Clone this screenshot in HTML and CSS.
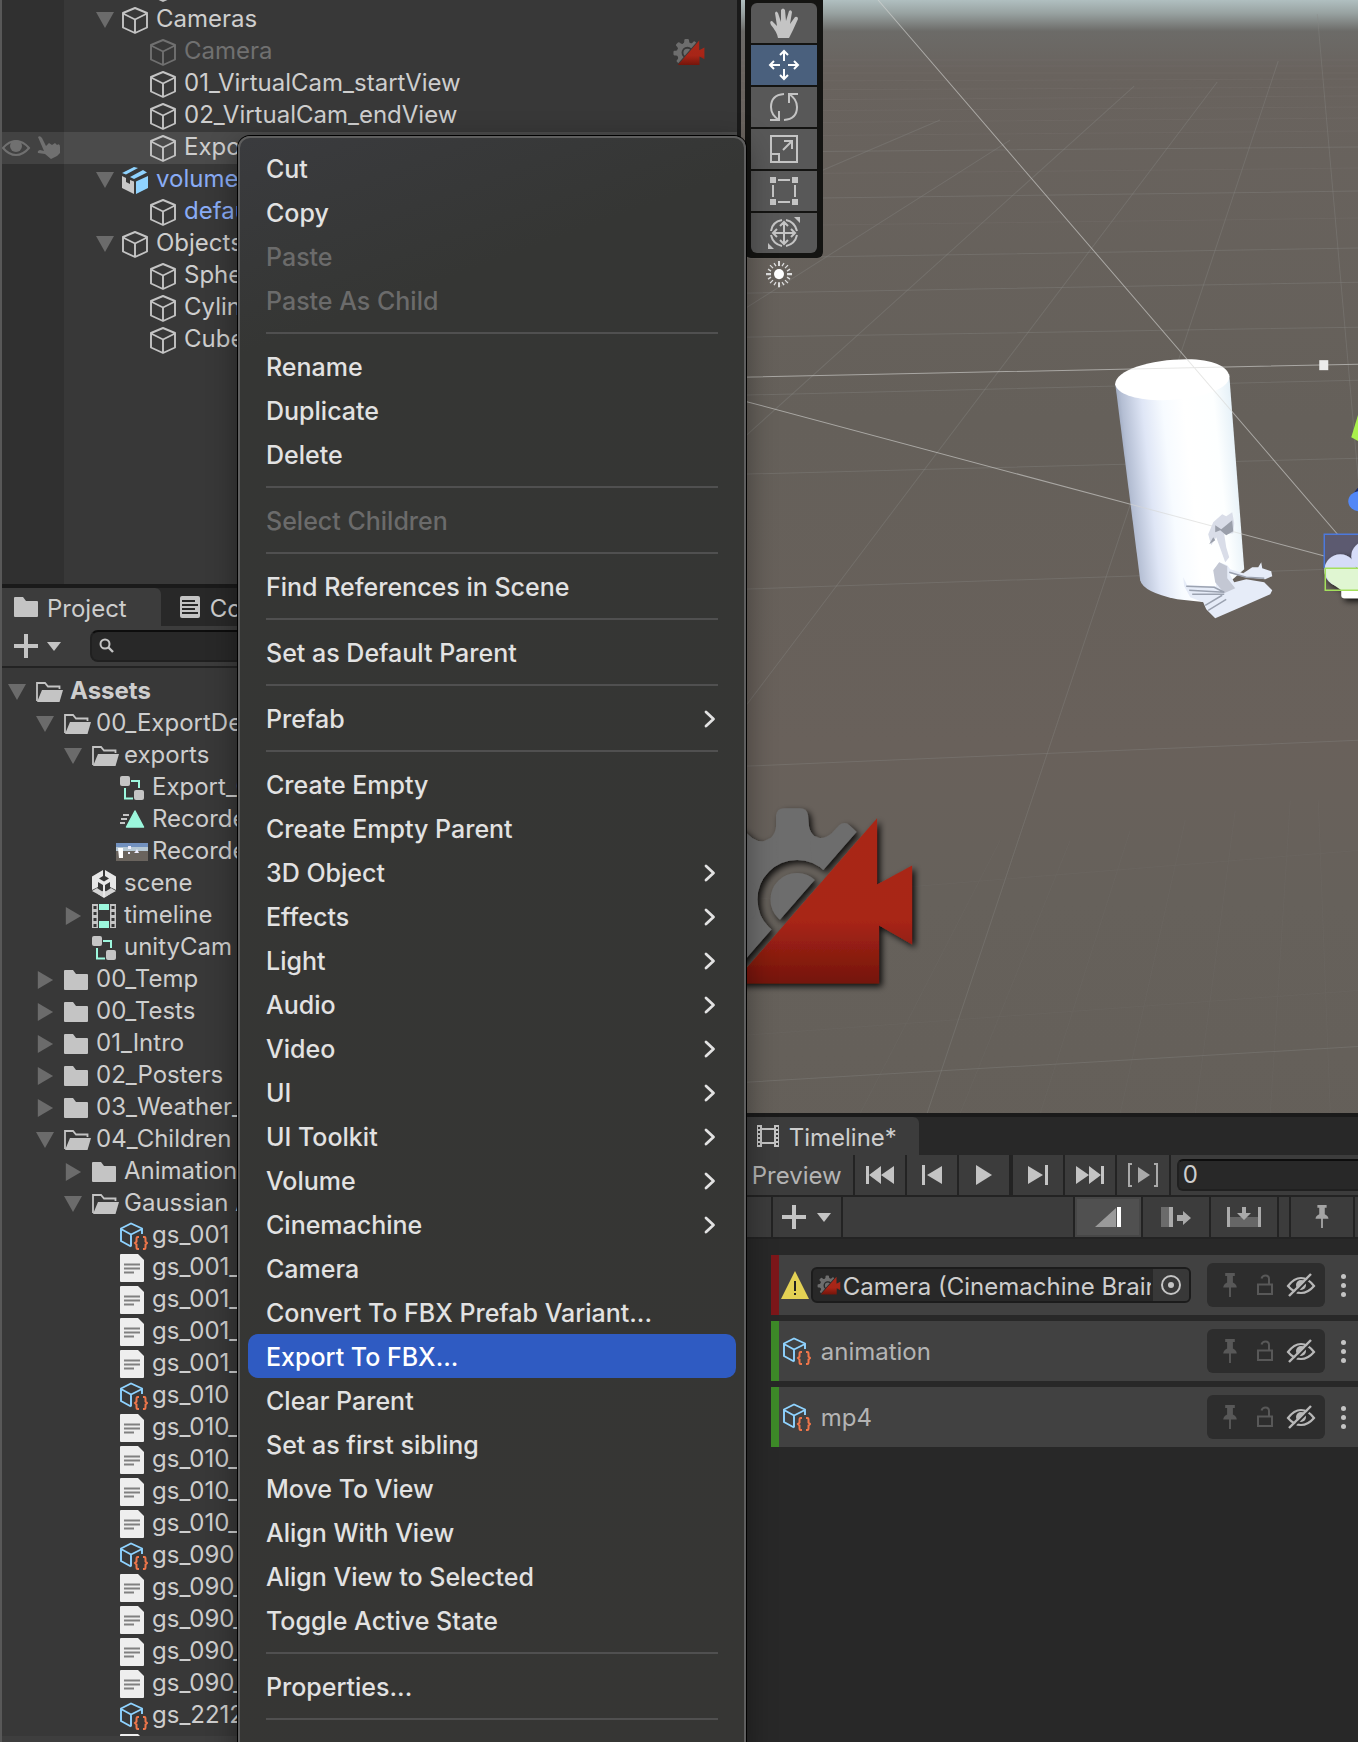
FILE: index.html
```html
<!DOCTYPE html>
<html lang="en">
<head>
<meta charset="utf-8">
<title>Scene editor</title>
<link rel="stylesheet" href="styles.css">
</head>
<body>
<svg class="defs" aria-hidden="true">
  <defs>
    <linearGradient id="redFill" x1="0" y1="0" x2="0" y2="1"><stop offset="0" stop-color="#a92819"/><stop offset=".62" stop-color="#a82517"/><stop offset="1" stop-color="#74150b"/></linearGradient>
    <clipPath id="gearClip"><path d="M690 800H884L747 957 690 1022Z"/></clipPath>
    <mask id="gearMask" maskUnits="userSpaceOnUse" x="690" y="790" width="230" height="210"><rect x="690" y="790" width="230" height="210" fill="#fff"/><circle cx="797" cy="899" r="33" fill="none" stroke="#000" stroke-width="13"/></mask>
  </defs>
  <symbol id="cine" viewBox="700 803 216 184">
    <g clip-path="url(#gearClip)"><g mask="url(#gearMask)" fill="#6d6d6d">
      <circle cx="795" cy="900" r="67"/>
      <path id="tooth" d="M762 842Q775 838 776 826V815Q777 808 784 808H800Q807 808 808 815L809 826Q811 837 826 842L810 860H780Z"/>
      <use href="#tooth" transform="rotate(43 795 900)"/>
      <use href="#tooth" transform="rotate(-45 795 900)"/>
      <use href="#tooth" transform="rotate(-90 795 900)"/>
      <use href="#tooth" transform="rotate(-135 795 900)"/>
    </g></g>
    <path d="M877 818V884L912 865V944L879 925V983H733Z" fill="url(#redFill)"/>
  </symbol>
  <symbol id="cube" viewBox="0 0 28 28"><path d="M14 2 26 7V21.500L14 27 2 21.500V7ZM2 7.500 14 13.500 26 7.500M14 13.500V27" fill="none" stroke="currentColor" stroke-width="1.900" stroke-linejoin="round"/></symbol>
  <symbol id="prefab" viewBox="0 0 28 28"><path d="M1 10 5 12V16L9 18V14L13 15.500V28L1 22Z" fill="#c8c8c8"/><path d="M15 15.500 27 10V22L15 28Z" fill="#8fd3ff"/><path d="M1 7 13 1 17 2 5 8.500ZM9 11 22 4 26 6.500 13 13Z" fill="#8fd3ff"/></symbol>
  <symbol id="folder" viewBox="0 0 28 28"><path d="M1 4H9L12 8H23Q24 8 24 9V23Q24 24 23 24H1Q0 24 0 23V5Q0 4 1 4Z" fill="#c4c4c4"/></symbol>
  <symbol id="folder-open" viewBox="0 0 28 28"><path d="M1 23V5H9L12 8.500H23.500V11" fill="none" stroke="#c4c4c4" stroke-width="1.800"/><path d="M6 12H27L23.500 24H1Z" fill="#c4c4c4"/></symbol>
  <symbol id="graph" viewBox="0 0 28 28"><rect y="2" width="10" height="10" rx="2" fill="#c4c4c4"/><rect x="14" y="16" width="10" height="10" rx="2" fill="#c4c4c4"/><path d="M11 7H19V14M5 14V24.500H13" fill="none" stroke="#9cf7dd" stroke-width="2"/></symbol>
  <symbol id="anim" viewBox="0 0 28 28"><path d="M15 5 23.500 21H6.500Z" fill="#9cf7dd" stroke="#9cf7dd" stroke-width="1.500" stroke-linejoin="round"/><path d="M3 9H9M1 13H7M0 17H5" stroke="#c4c4c4" stroke-width="1.800"/></symbol>
  <symbol id="thumb" viewBox="-4 0 32 28"><rect x="-4" y="5" width="32" height="18" fill="#6a645e"/><rect x="-4" y="5" width="32" height="6" fill="#7291bf"/><rect x="-4" y="9" width="32" height="4" fill="#b6c8d4"/><path d="M-2 10H3V20H-1Z" fill="#fff"/><path d="M8 8h3v3H8zM8 14h2v2H8zM15 14 17 11 19 15H14Z" fill="#eef"/></symbol>
  <symbol id="unity" viewBox="0 0 28 28"><path d="M11 0V6L7 8.500 12 11.500 17 8.500 13 6V0L24 6.500V20L18 17V12L13 15V21L18 24 12 28 6 24 11 21V15L6 12V17L0 20V6.500Z" fill="#e8e8e8"/><path d="M0 21 5 18 11 22V27ZM24 21 19 18 13 22V27Z" fill="#d4d4d4"/></symbol>
  <symbol id="clip" viewBox="0 0 28 28"><path d="M0 2H6V26H0ZM18 2H24V26H18Z" fill="#c4c4c4"/><path d="M7 2H17V8H7ZM7 19H17V26H7Z" fill="#9cf7dd"/><path d="M3 4V26M21 4V26" stroke="#333" stroke-width="3" stroke-dasharray="3 3"/></symbol>
  <symbol id="asset" viewBox="0 0 28 28"><path d="M22 12V6.500L11 1.500 1 6.500V19L11 24.500M1 7 11 12.500 22 7M11 12.500V24.500" fill="none" stroke="#8fd3ff" stroke-width="1.900"/><path d="M19 15H17.500Q16.500 15 16.500 17V19.500L15 21 16.500 22.500V25Q16.500 27 17.500 27H19M23 15H24.500Q25.500 15 25.500 17V19.500L27 21 25.500 22.500V25Q25.500 27 24.500 27H23" fill="none" stroke="#f0764a" stroke-width="2"/></symbol>
  <symbol id="file" viewBox="0 0 28 28"><path d="M1 0H18L24 6V27Q24 28 23 28H1Q0 28 0 27V1Q0 0 1 0Z" fill="#eee"/><path d="M4 10.500H20M4 14.500H20M4 18.500H14" stroke="#808080" stroke-width="1.800"/></symbol>
  <symbol id="pin" viewBox="0 0 16 26"><path d="M3 0H13V3H11V10Q15 12 15 15H9V25H7V15H1Q1 12 5 10V3H3Z" fill="currentColor"/></symbol>
  <symbol id="lock" viewBox="0 0 18 22"><path d="M2 10.500H16V20H2ZM13 10V5Q13 1.500 9.500 1.500 6.500 1.500 5.500 4.500" fill="none" stroke="currentColor" stroke-width="2"/></symbol>
  <symbol id="hidden" viewBox="0 0 30 24"><path d="M2 13Q8 5 15 5T28 13Q22 20 15 20T2 13Z" fill="none" stroke="currentColor" stroke-width="2.200"/><circle cx="15" cy="12" r="5" fill="currentColor"/><path d="M5 24 27 2" stroke="#2d2d2d" stroke-width="2"/><path d="M3 23 25 1" stroke="currentColor" stroke-width="2.400"/></symbol>
  <symbol id="chev" viewBox="0 0 12 18"><path d="M2 2 9.500 9 2 16" fill="none" stroke="currentColor" stroke-width="2.800" stroke-linecap="round" stroke-linejoin="round"/></symbol>
</svg>

<main class="editor">
  <div class="column column-left">
    <section class="hierarchy" aria-label="Hierarchy">
      <ul class="tree">
        <li class="row d1 above"><svg class="icon"><use href="#cube"/></svg></li>
        <li class="row d0"><i class="arrow open"></i><svg class="icon"><use href="#cube"/></svg><span class="label">Cameras</span></li>
        <li class="row d1 inactive"><svg class="icon"><use href="#cube"/></svg><span class="label">Camera</span><svg class="badge"><use href="#cine"/></svg></li>
        <li class="row d1"><svg class="icon"><use href="#cube"/></svg><span class="label">01_VirtualCam_startView</span></li>
        <li class="row d1"><svg class="icon"><use href="#cube"/></svg><span class="label">02_VirtualCam_endView</span></li>
        <li class="row d1 hover">
          <svg class="row-tools" viewBox="0 0 62 32"><path d="M1 16Q7 9 14 9T27 16Q21 23 14 23T1 16Z" fill="none" stroke="#707070" stroke-width="2"/><circle cx="14" cy="14" r="6" fill="#707070"/><path d="M36 5Q38 3 40 6L44 14 47 11 50 13 53 11 55 13Q58 11 58 15V21L55 24 49 27 43 22 36 21Q35 19 38 18L42 19Z" fill="#707070"/></svg>
          <svg class="icon"><use href="#cube"/></svg><span class="label">Expo</span></li>
        <li class="row d0 link"><i class="arrow open"></i><svg class="icon"><use href="#prefab"/></svg><span class="label">volume</span></li>
        <li class="row d1 link"><svg class="icon"><use href="#cube"/></svg><span class="label">defau</span></li>
        <li class="row d0"><i class="arrow open"></i><svg class="icon"><use href="#cube"/></svg><span class="label">Objects</span></li>
        <li class="row d1"><svg class="icon"><use href="#cube"/></svg><span class="label">Sphe</span></li>
        <li class="row d1"><svg class="icon"><use href="#cube"/></svg><span class="label">Cylin</span></li>
        <li class="row d1"><svg class="icon"><use href="#cube"/></svg><span class="label">Cube</span></li>
      </ul>
    </section>
    <section class="project" aria-label="Project">
      <div class="tabs">
        <button class="tab active"><svg width="24" height="20" viewBox="0 4 24 20"><path d="M1 4H9L12 8H23Q24 8 24 9V23Q24 24 23 24H1Q0 24 0 23V5Q0 4 1 4Z" fill="#c4c4c4"/></svg><span>Project</span></button>
        <button class="tab console"><svg width="20" height="22" viewBox="0 0 20 22"><rect width="20" height="22" rx="2" fill="#c4c4c4"/><path d="M2 5H15M2 9H18M2 13H15M2 17H18" stroke="#282828" stroke-width="2"/></svg><span>Co</span></button>
      </div>
      <div class="project-bar">
        <button class="add" aria-label="Create"><svg width="48" height="24" viewBox="0 0 48 24"><path d="M12 0V24M0 12H24" stroke="#c4c4c4" stroke-width="4"/><path d="M33 8H47L40 17Z" fill="#c4c4c4"/></svg></button>
        <label class="search"><svg width="16" height="16" viewBox="0 0 16 16"><circle cx="6" cy="6" r="4.500" fill="none" stroke="#c4c4c4" stroke-width="2"/><path d="M9 9 14 14" stroke="#c4c4c4" stroke-width="2.400"/></svg><input type="text" aria-label="Search assets"></label>
      </div>
      <ul class="tree assets">
        <li class="row d0 strong"><i class="arrow open"></i><svg class="icon"><use href="#folder-open"/></svg><span class="label">Assets</span></li>
        <li class="row d1"><i class="arrow open"></i><svg class="icon"><use href="#folder-open"/></svg><span class="label">00_ExportDe</span></li>
        <li class="row d2"><i class="arrow open"></i><svg class="icon"><use href="#folder-open"/></svg><span class="label">exports</span></li>
        <li class="row d3"><svg class="icon"><use href="#graph"/></svg><span class="label">Export_C</span></li>
        <li class="row d3"><svg class="icon"><use href="#anim"/></svg><span class="label">Recorde</span></li>
        <li class="row d3"><svg class="icon wide"><use href="#thumb"/></svg><span class="label">Recorde</span></li>
        <li class="row d2"><svg class="icon"><use href="#unity"/></svg><span class="label">scene</span></li>
        <li class="row d2"><i class="arrow"></i><svg class="icon"><use href="#clip"/></svg><span class="label">timeline</span></li>
        <li class="row d2"><svg class="icon"><use href="#graph"/></svg><span class="label">unityCam</span></li>
        <li class="row d1"><i class="arrow"></i><svg class="icon"><use href="#folder"/></svg><span class="label">00_Temp</span></li>
        <li class="row d1"><i class="arrow"></i><svg class="icon"><use href="#folder"/></svg><span class="label">00_Tests</span></li>
        <li class="row d1"><i class="arrow"></i><svg class="icon"><use href="#folder"/></svg><span class="label">01_Intro</span></li>
        <li class="row d1"><i class="arrow"></i><svg class="icon"><use href="#folder"/></svg><span class="label">02_Posters</span></li>
        <li class="row d1"><i class="arrow"></i><svg class="icon"><use href="#folder"/></svg><span class="label">03_Weather_</span></li>
        <li class="row d1"><i class="arrow open"></i><svg class="icon"><use href="#folder-open"/></svg><span class="label">04_Children</span></li>
        <li class="row d2"><i class="arrow"></i><svg class="icon"><use href="#folder"/></svg><span class="label">Animation</span></li>
        <li class="row d2"><i class="arrow open"></i><svg class="icon"><use href="#folder-open"/></svg><span class="label">Gaussian A</span></li>
        <li class="row d3"><svg class="icon"><use href="#asset"/></svg><span class="label">gs_001</span></li>
        <li class="row d3"><svg class="icon"><use href="#file"/></svg><span class="label">gs_001_</span></li>
        <li class="row d3"><svg class="icon"><use href="#file"/></svg><span class="label">gs_001_</span></li>
        <li class="row d3"><svg class="icon"><use href="#file"/></svg><span class="label">gs_001_</span></li>
        <li class="row d3"><svg class="icon"><use href="#file"/></svg><span class="label">gs_001_</span></li>
        <li class="row d3"><svg class="icon"><use href="#asset"/></svg><span class="label">gs_010</span></li>
        <li class="row d3"><svg class="icon"><use href="#file"/></svg><span class="label">gs_010_</span></li>
        <li class="row d3"><svg class="icon"><use href="#file"/></svg><span class="label">gs_010_</span></li>
        <li class="row d3"><svg class="icon"><use href="#file"/></svg><span class="label">gs_010_</span></li>
        <li class="row d3"><svg class="icon"><use href="#file"/></svg><span class="label">gs_010_</span></li>
        <li class="row d3"><svg class="icon"><use href="#asset"/></svg><span class="label">gs_090</span></li>
        <li class="row d3"><svg class="icon"><use href="#file"/></svg><span class="label">gs_090_</span></li>
        <li class="row d3"><svg class="icon"><use href="#file"/></svg><span class="label">gs_090_</span></li>
        <li class="row d3"><svg class="icon"><use href="#file"/></svg><span class="label">gs_090_</span></li>
        <li class="row d3"><svg class="icon"><use href="#file"/></svg><span class="label">gs_090_</span></li>
        <li class="row d3"><svg class="icon"><use href="#asset"/></svg><span class="label">gs_2212</span></li>
        <li class="row d3"><svg class="icon"><use href="#file"/></svg></li>
      </ul>
      <div class="project-foot"></div>
    </section>
  </div>

  <div class="column column-right">
    <section class="scene" aria-label="Scene view">
      <svg class="scene-canvas" viewBox="741 0 617 1113" preserveAspectRatio="xMinYMin slice">
        <defs>
          <linearGradient id="ground" x1="0" y1="0" x2="0" y2="1"><stop offset="0" stop-color="#b0bfc0"/><stop offset=".011" stop-color="#98a2a1"/><stop offset=".026" stop-color="#6c6b68"/><stop offset=".06" stop-color="#69635e"/><stop offset=".35" stop-color="#65605a"/><stop offset=".62" stop-color="#69615b"/><stop offset=".75" stop-color="#66615b"/><stop offset="1" stop-color="#645f59"/></linearGradient>
          <linearGradient id="body" x1="1122" y1="500" x2="1240" y2="488" gradientUnits="userSpaceOnUse"><stop offset="0" stop-color="#8d99b0"/><stop offset=".08" stop-color="#b4bed3"/><stop offset=".25" stop-color="#dfe6f6"/><stop offset=".42" stop-color="#f7fbff"/><stop offset=".6" stop-color="#fff"/><stop offset=".85" stop-color="#fdffff"/><stop offset="1" stop-color="#e6f1f8"/></linearGradient>
          <filter id="soft" x="-20%" y="-20%" width="140%" height="140%"><feDropShadow dx="3" dy="3" stdDeviation="3" flood-color="#000" flood-opacity=".85"/></filter>
        </defs>
        <rect x="741" width="700" height="1200" fill="url(#ground)"/>
        <g stroke="#8b8a86" stroke-opacity=".34" fill="none">
          <path d="M1278 61 927 1113M1217 82 747 704M1134 86 741 440M1010 140 741 311M940 120 741 205M1317 14 1358 479"/>
          <path d="M741 152 1358 147M741 199 1358 191M741 258 1358 248M741 293 1358 282M741 337 1358 327M741 395 1358 380M741 474 1358 458M741 589 1358 568M741 766 1358 740M741 1082 1358 1046"/>
        </g>
        <g stroke="#8b8a86" stroke-opacity=".14"><path d="M741 60H1358M741 66H1358M741 73H1358M741 81 1358 79M741 90 1358 87M741 100 1358 96M741 111 1358 107M741 123 1358 118M741 136 1358 131M741 174 1358 168M741 226 1358 218"/></g>
        <g stroke="#8b8a86" stroke-opacity=".08"><path d="M860 1113 1000 840M960 1113 1070 840M1040 1113 1130 830M1120 1113 1185 820M1195 1113 1235 810M1270 1113 1290 800M1330 1113 1318 800M741 900 1358 850M741 1035 1358 990"/></g>
        <path d="M1115 383 1140 580Q1143 592 1177 599L1205 602 1220 590 1244 569 1229 374Z" fill="url(#body)"/>
        <path d="M1115 384C1115 370 1150 359 1187 359 1212 359 1228 366 1229 376 1230 390 1195 400 1157 400 1135 399 1117 394 1115 384Z" fill="#fff"/>
        <g stroke="#d6d6d4" stroke-opacity=".6">
          <path d="M878 0 1351 550M741 400 1325 556M741 377 1358 364"/>
        </g>
        <path d="M1222 514 1226 516 1232 512 1234 523 1233 533 1224 534 1226 547 1229 557 1225 562 1220 548 1216 537 1211 545 1208 534 1213 522Z" fill="#d9dde8"/>
        <path d="M1215 525 1221 529 1226 525 1232 520 1233 531 1226 535 1220 530 1215 532ZM1209 544 1213 537 1215 540Z" fill="#9a9faa"/>
        <path d="M1183 577 1187 585 1216 586 1214 569 1219 562 1227 565 1230 569 1243 573 1252 567 1258 567 1261 562 1262 568 1271 571 1272 576 1265 579 1246 577 1229 573 1234 582 1246 579 1264 582 1272 590 1270 594 1245 605 1215 618 1206 609 1203 602 1190 597 1184 586Z" fill="#e6ecf8"/>
        <path d="M1213 570 1219 562 1227 566 1227 578 1235 588 1224 593 1215 582Z" fill="#c3c7d3"/>
        <path d="M1186 586 1214 587 1224 592 1189 590M1192 594 1224 594M1205 605 1222 595M1208 610 1226 599M1229 572 1246 577 1264 578" fill="none" stroke="#9ba2b0" stroke-width="1.500"/>
        <rect x="1319" y="360" width="9" height="10" fill="#ebebeb"/>
        <path d="M1358 414 1351 437 1358 441Z" fill="#a9f04c"/>
        <path d="M1358 487 1350 497 1358 500Z" fill="#1c2c6e"/><ellipse cx="1359" cy="501" rx="11" ry="10" fill="#5288f7"/>
        <rect x="1324" y="534" width="60" height="35" fill="#5c5a70"/>
        <g filter="url(#soft)"><circle cx="1340" cy="570" r="16" fill="#d6dcf8"/><circle cx="1366" cy="556" r="15" fill="#d6dcf8"/><rect x="1341" y="576" width="30" height="22" rx="3" fill="#fff"/></g>
        <path d="M1326 568H1358V590H1341L1331 583Q1325 578 1326 568Z" fill="#e0f6d2"/>
        <path d="M1358 534H1324V568" fill="none" stroke="#4c79dd" stroke-width="1.500"/><path d="M1358 568H1325V590H1358" fill="none" stroke="#a4e05c" stroke-width="1.500"/>
        <g filter="url(#soft)"><use href="#cine" x="700" y="803" width="216" height="184"/></g>
        <path d="M779 261V266M779 282V287M766 274H771M787 274H792" stroke="#ddd" stroke-width="2"/>
        <path d="M770 265 773 268M788 265 785 268M770 283 773 280M788 283 785 280M774 263 776 266M784 263 782 266M768 269 771 271M790 269 787 271M768 279 771 277M790 279 787 277M774 285 776 282M784 285 782 282" stroke="#ddd" stroke-width="1.300"/>
        <circle cx="779" cy="274" r="5" fill="#fff"/>
      </svg>
      <div class="tools" role="toolbar" aria-label="Tools">
        <button aria-label="View tool"><svg viewBox="0 0 32 32"><path d="M10 31Q9 25 3 18 1 14 4 14L9 19 7 6Q8 3 10 6L13 15V3Q15 0 17 3L18 14 21 4Q23 2 24 5L22 17 27 10Q30 9 30 12L25 23 21 31Z" fill="#c4c4c4"/></svg></button>
        <button class="on" aria-label="Move tool"><svg viewBox="0 0 32 32"><path d="M16 12V2M12 6 16 2 20 6M16 20V30M12 26 16 30 20 26M12 16H2M6 12 2 16 6 20M20 16H30M26 12 30 16 26 20" fill="none" stroke="#fff" stroke-width="2"/></svg></button>
        <button aria-label="Rotate tool"><svg viewBox="0 0 32 32"><path d="M16 3Q3 4 3 16 3 24 11 29M11 20V29H2M16 29Q29 28 29 16 29 8 21 3M21 12V3H30" fill="none" stroke="#c4c4c4" stroke-width="2"/></svg></button>
        <button aria-label="Scale tool"><svg viewBox="0 0 32 32"><path d="M3 3H29V29H3ZM3 21H11V29M15 17 24 8M16 8H24V16" fill="none" stroke="#c4c4c4" stroke-width="2"/></svg></button>
        <button aria-label="Rect tool"><svg viewBox="0 0 32 32"><path d="M2 2H8V8H2ZM24 2H30V8H24ZM2 24H8V30H2ZM24 24H30V30H24Z" fill="#c4c4c4"/><path d="M10 5H22M10 27H22M5 10V22M27 10V22" stroke="#c4c4c4" stroke-width="2"/></svg></button>
        <button aria-label="Transform tool"><svg viewBox="0 0 32 32"><path d="M16 6V26M6 16H26M12 9 16 5 20 9M12 23 16 27 20 23M9 12 5 16 9 20M23 12 27 16 23 20M3 14Q4 5 14 3M18 3Q27 5 29 14M29 18Q27 27 18 29M14 29Q5 27 3 18" fill="none" stroke="#c4c4c4" stroke-width="2"/><path d="M26 0H32V6ZM0 26V32H6Z" fill="#c4c4c4"/></svg></button>
      </div>
    </section>

    <section class="timeline" aria-label="Timeline">
      <div class="tabs">
        <button class="tab active"><svg width="24" height="22" viewBox="0 0 24 22"><path d="M1 0H6V22H1ZM18 0H23V22H18Z" fill="#c4c4c4"/><path d="M6 4H18M6 18H18" stroke="#c4c4c4" stroke-width="2"/><path d="M3 2V22M21 2V22" stroke="#383838" stroke-width="2" stroke-dasharray="2 2"/></svg><span>Timeline*</span></button>
      </div>
      <div class="bar">
        <button class="preview">Preview</button>
        <button class="step" aria-label="First frame"><svg width="30" height="20" viewBox="0 0 30 20"><path d="M1 1H4V19H1ZM16 1V19L4 10ZM29 1V19L16 10Z" fill="#c4c4c4"/></svg></button>
        <button class="step" aria-label="Previous frame"><svg width="22" height="20" viewBox="0 0 22 20"><path d="M1 0H4V20H1ZM21 1V19L6 10Z" fill="#c4c4c4"/></svg></button>
        <button class="step play" aria-label="Play"><svg width="18" height="20" viewBox="0 0 18 20"><path d="M1 0 17 10 1 20Z" fill="#c4c4c4"/></svg></button>
        <button class="step" aria-label="Next frame"><svg width="22" height="20" viewBox="0 0 22 20"><path d="M18 0H21V20H18ZM1 1V19L16 10Z" fill="#c4c4c4"/></svg></button>
        <button class="step" aria-label="Last frame"><svg width="30" height="20" viewBox="0 0 30 20"><path d="M26 1H29V19H26ZM14 1V19L26 10ZM1 1V19L14 10Z" fill="#c4c4c4"/></svg></button>
        <button class="step" aria-label="Play range"><svg width="32" height="24" viewBox="0 0 32 24"><path d="M5 1H2V23H5M27 1H30V23H27" fill="none" stroke="#aaa" stroke-width="2"/><path d="M11 4 23 12 11 20Z" fill="#aaa"/></svg></button>
        <div class="frame"><input type="text" value="0" aria-label="Current frame"></div>
      </div>
      <div class="bar second">
        <span class="cell edge"></span>
        <button class="cell plus" aria-label="Add track"><svg width="50" height="24" viewBox="0 0 50 24"><path d="M12 0V24M0 12H24" stroke="#c4c4c4" stroke-width="4"/><path d="M35 8H49L42 17Z" fill="#c4c4c4"/></svg></button>
        <span class="cell fill"></span>
        <button class="cell mode on" aria-label="Mix mode"><svg width="28" height="20" viewBox="0 0 28 20"><path d="M1 20 22 1V20Z" fill="#9a9a9a"/><rect x="23" width="4" height="20" fill="#fff"/></svg></button>
        <button class="cell mode" aria-label="Ripple mode"><svg width="30" height="20" viewBox="0 0 30 20"><rect width="8" height="20" fill="#6b6b6b"/><rect x="8" width="4" height="20" fill="#aaa"/><path d="M16 8H22V4L30 11 22 18V14H16Z" fill="#aaa"/></svg></button>
        <button class="cell mode" aria-label="Replace mode"><svg width="34" height="20" viewBox="0 0 34 20"><rect x="3" y="10" width="28" height="10" fill="#666"/><path d="M0 0H3V20H0ZM31 0H34V20H31ZM15 0H19V6H24L17 13 10 6H15Z" fill="#aaa"/></svg></button>
        <span class="cell gap"></span>
        <button class="cell pinned" aria-label="Edit in track"><svg width="16" height="24"><use href="#pin"/></svg></button>
        <span class="cell rest"></span>
      </div>
      <div class="tracks">
        <div class="track red">
          <svg class="warn" width="28" height="28" viewBox="0 0 28 28"><path d="M14 0 28 28H0Z" fill="#e3d154"/><path d="M14 10V20M14 22V24" stroke="#222" stroke-width="2"/></svg>
          <div class="field"><svg width="24" height="20"><use href="#cine"/></svg><span class="value">Camera (Cinemachine Brain</span><button class="pick" aria-label="Select object"><svg width="22" height="22" viewBox="0 0 22 22"><circle cx="11" cy="11" r="9" fill="none" stroke="#c4c4c4" stroke-width="2"/><circle cx="11" cy="11" r="3" fill="#c4c4c4"/></svg></button></div>
          <div class="switches"><svg class="dim" width="16" height="25"><use href="#pin"/></svg><svg class="dim lock" width="18" height="22"><use href="#lock"/></svg><svg width="30" height="24"><use href="#hidden"/></svg></div>
          <button class="dots" aria-label="Track options"><i></i><i></i><i></i></button>
        </div>
        <div class="track">
          <svg class="kind" width="28" height="28"><use href="#asset"/></svg><span class="name">animation</span>
          <div class="switches"><svg class="dim" width="16" height="25"><use href="#pin"/></svg><svg class="dim lock" width="18" height="22"><use href="#lock"/></svg><svg width="30" height="24"><use href="#hidden"/></svg></div>
          <button class="dots" aria-label="Track options"><i></i><i></i><i></i></button>
        </div>
        <div class="track">
          <svg class="kind" width="28" height="28"><use href="#asset"/></svg><span class="name">mp4</span>
          <div class="switches"><svg class="dim" width="16" height="25"><use href="#pin"/></svg><svg class="dim lock" width="18" height="22"><use href="#lock"/></svg><svg width="30" height="24"><use href="#hidden"/></svg></div>
          <button class="dots" aria-label="Track options"><i></i><i></i><i></i></button>
        </div>
      </div>
    </section>
  </div>

  <div class="menu" role="menu">
    <button role="menuitem">Cut</button>
    <button role="menuitem">Copy</button>
    <button role="menuitem" disabled>Paste</button>
    <button role="menuitem" disabled>Paste As Child</button>
    <hr>
    <button role="menuitem">Rename</button>
    <button role="menuitem">Duplicate</button>
    <button role="menuitem">Delete</button>
    <hr>
    <button role="menuitem" disabled>Select Children</button>
    <hr>
    <button role="menuitem">Find References in Scene</button>
    <hr>
    <button role="menuitem">Set as Default Parent</button>
    <hr>
    <button role="menuitem">Prefab<svg><use href="#chev"/></svg></button>
    <hr>
    <button role="menuitem">Create Empty</button>
    <button role="menuitem">Create Empty Parent</button>
    <button role="menuitem">3D Object<svg><use href="#chev"/></svg></button>
    <button role="menuitem">Effects<svg><use href="#chev"/></svg></button>
    <button role="menuitem">Light<svg><use href="#chev"/></svg></button>
    <button role="menuitem">Audio<svg><use href="#chev"/></svg></button>
    <button role="menuitem">Video<svg><use href="#chev"/></svg></button>
    <button role="menuitem">UI<svg><use href="#chev"/></svg></button>
    <button role="menuitem">UI Toolkit<svg><use href="#chev"/></svg></button>
    <button role="menuitem">Volume<svg><use href="#chev"/></svg></button>
    <button role="menuitem">Cinemachine<svg><use href="#chev"/></svg></button>
    <button role="menuitem">Camera</button>
    <button role="menuitem">Convert To FBX Prefab Variant...</button>
    <button role="menuitem" class="selected">Export To FBX...</button>
    <button role="menuitem">Clear Parent</button>
    <button role="menuitem">Set as first sibling</button>
    <button role="menuitem">Move To View</button>
    <button role="menuitem">Align With View</button>
    <button role="menuitem">Align View to Selected</button>
    <button role="menuitem">Toggle Active State</button>
    <hr>
    <button role="menuitem">Properties...</button>
    <hr>
  </div>
</main>
</body>
</html>
```
FILE: styles.css
```css
* { box-sizing: border-box; }
body {
  margin: 0;
  background: #282828;
  color: #cecece;
  font: 24px/32px Inter, "Liberation Sans", sans-serif;
}
button, input { font: inherit; color: inherit; border: 0; padding: 0; background: none; }
button { display: flex; align-items: center; justify-content: center; white-space: nowrap; }
svg { display: block; flex: none; }
ul { list-style: none; margin: 0; padding: 0; }
.defs { position: absolute; width: 0; height: 0; }

.editor {
  position: relative;
  display: grid;
  grid-template-columns: minmax(0, 6fr) minmax(0, 5fr);
  height: 100vh;
  overflow: hidden;
}
.column { display: flex; flex-direction: column; min-width: 0; min-height: 0; }
.column-left { border-left: 2px solid #585858; }

/* Hierarchy */
.hierarchy {
  flex: 0 0 588px;
  overflow: hidden;
  border-right: 4px solid #1a1a1a;
  border-bottom: 4px solid #1a1a1a;
  background: linear-gradient(90deg, #303030 62px, #383838 62px);
}
.row { display: flex; align-items: center; height: 32px; white-space: nowrap; position: relative; }
.row .label { align-self: flex-start; line-height: 30px; margin-left: 7px; }
.row.above { margin-top: -28px; }
.icon { width: 28px; height: 28px; color: #c4c4c4; margin-left: 25px; }
.arrow { width: 18px; height: 18px; background: #6b6b6b; clip-path: polygon(10% 0, 95% 50%, 10% 100%); }
.arrow.open { clip-path: polygon(0 5%, 100% 5%, 50% 95%); }
.hierarchy .d0 { padding-left: 94px; }
.hierarchy .d1 { padding-left: 122px; }
.hierarchy .d0 .icon { margin-left: 7px; }
.inactive, .inactive .icon { color: #707070; }
.link { color: #8aacf5; }
.hover { background: linear-gradient(90deg, #424242 62px, #4b4b4b 62px); }
.badge { width: 32px; height: 28px; margin-left: auto; margin-right: 32px; }
.row-tools { position: absolute; left: 0; top: 0; width: 62px; height: 32px; }

/* Project */
.project { flex: 1; min-height: 0; display: flex; flex-direction: column; background: #383838; }
.tabs { display: flex; background: #282828; height: 38px; flex: none; }
.tab { gap: 9px; padding: 0 34px 0 12px; background: #282828; }
.tab span { padding-top: 3px; }
.tab.active { background: #3c3c3c; border-radius: 0 6px 0 0; }
.tab.console { padding-left: 19px; gap: 10px; }
.project-bar { display: flex; align-items: center; height: 42px; flex: none; background: #3c3c3c; border-bottom: 2px solid #232323; padding-left: 12px; }
.project-bar .add { margin-right: 28px; }
.search { flex: 1; display: flex; align-items: center; gap: 8px; height: 32px; padding-left: 7px; background: #282828; border: 2px solid #202020; border-top-color: #0d0d0d; border-radius: 8px; }
.search input { flex: 1; min-width: 0; }
.assets { flex: 1; min-height: 0; overflow: hidden; padding-top: 8px; }
.assets .d0 { padding-left: 6px; }
.assets .d1 { padding-left: 34px; }
.assets .d2 { padding-left: 62px; }
.assets .d3 { padding-left: 90px; }
.assets .icon { margin-left: 28px; }
.assets .arrow + .icon { margin-left: 10px; }
.assets .icon.wide { width: 32px; margin-left: 24px; }
.assets .label { margin-left: 4px; }
.assets .strong .label { margin-left: 6px; font-weight: 700; }
.project-foot { flex: 0 0 6px; background: #3e3e3e; }

/* Scene view */
.scene { position: relative; flex: 1; min-height: 0; overflow: hidden; }
.scene-canvas { width: 100%; height: 100%; }
.tools {
  position: absolute; left: 4px; top: 0;
  display: flex; flex-direction: column; gap: 2px;
  width: 78px; padding: 3px 6px 5px;
  background: #141412; border-radius: 0 0 6px 6px;
}
.tools button { height: 40px; background: #585858; }
.tools button:first-child { border-radius: 6px 6px 0 0; }
.tools button:last-child { border-radius: 0 0 6px 6px; }
.tools .on { background: #4a607d; }
.tools svg { width: 32px; height: 32px; }

/* Timeline */
.timeline { flex: 0 0 629px; border-top: 4px solid #1a1a1a; background: #282828; }
.timeline .tab { padding: 0 22px 0 15px; }
.bar { display: flex; gap: 2px; height: 42px; background: #232323; border-bottom: 2px solid #232323; }
.bar > * { background: #3c3c3c; flex: none; }
.preview { width: 112px; padding-top: 1px; color: #b4b4b4; }
.step { width: 50px; }
.step.play { margin-right: 2px; }
.step:nth-child(7) { width: 52px; }
.bar .frame { flex: 1; min-width: 0; padding: 4px 0 4px 6px; }
.frame input { width: 100%; height: 32px; padding-left: 4px; background: #282828; border: 2px solid #202020; border-top-color: #0d0d0d; border-right: 0; border-radius: 6px 0 0 6px; }
.cell.edge { width: 30px; }
.cell.plus { width: 68px; }
.bar .cell.fill { flex: 1; min-width: 0; }
.cell.mode { width: 66px; }
.cell.mode.on { background: #505050; border: 2px solid #474747; }
.cell.gap { width: 10px; }
.cell.pinned { width: 62px; color: #a4a4a4; }
.cell.rest { width: 3px; }
.tracks { display: flex; flex-direction: column; gap: 6px; padding: 16px 0 0 30px; }
.track { display: flex; align-items: center; height: 60px; background: #414141; border-left: 8px solid #3d8a28; padding: 0 11px 0 2px; }
.track.red { border-left-color: #7c171a; }
.field { flex: 1; min-width: 0; display: flex; align-items: center; gap: 2px; height: 36px; margin-left: 2px; padding-left: 4px; background: #282828; border: 2px solid #1c1c1c; border-radius: 6px; overflow: hidden; }
.value { flex: 1; min-width: 0; overflow: hidden; white-space: nowrap; padding-top: 3px; }
.pick { width: 36px; height: 32px; background: #383838; }
.kind { margin-left: 2px; }
.name { flex: 1; margin-left: 10px; padding-top: 2px; color: #b4b4b4; }
.switches { display: flex; align-items: center; gap: 12px; width: 118px; height: 44px; margin-left: 16px; padding-left: 15px; background: #2d2d2d; border-radius: 6px; color: #b8b8b8; }
.switches .dim { color: #585858; }
.switches .lock { margin-left: 6px; }
.dots { flex-direction: column; gap: 4px; width: 8px; margin-left: 14px; }
.dots i { width: 5px; height: 5px; border-radius: 50%; background: #c4c4c4; }

/* Context menu */
.menu {
  position: absolute; left: 238px; top: 136px; bottom: -20px; width: 508px;
  padding: 8px 8px 0;
  background: linear-gradient(160deg, #3a3b3e 0, #353634 12%, #363634 100%);
  border: 2px solid #5e5e5e; border-radius: 12px;
  box-shadow: 0 0 0 1px #000, 0 8px 30px rgba(0, 0, 0, .4);
  color: #e2e2e2; font-size: 25px; font-weight: 500;
}
.menu button { width: 100%; height: 44px; padding: 2px 20px 0 18px; border-radius: 10px; justify-content: space-between; }
.menu button:disabled { color: #6b6b6b; }
.menu .selected { background: #2f5bc2; color: #fff; }
.menu svg { width: 12px; height: 18px; }
.menu hr { height: 2px; margin: 10px 18px; border: 0; background: #505050; }
```
